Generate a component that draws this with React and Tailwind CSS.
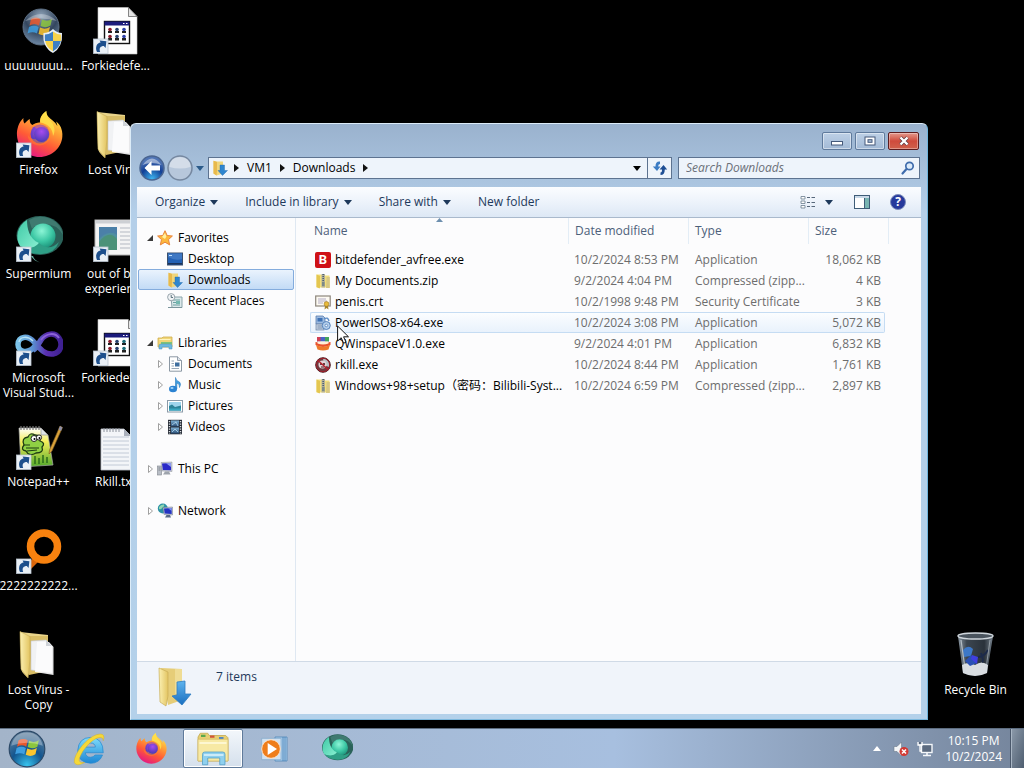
import React from "react";

/* ---------- shared gradients ---------- */

function Gradients() {
  return (
    <svg className="absolute h-0 w-0" aria-hidden="true">
      <defs>
        <linearGradient id="ff-body" x1="0.8" y1="0" x2="0.3" y2="1">
          <stop offset="0" stopColor="#fff44f" />
          <stop offset="0.35" stopColor="#ffa436" />
          <stop offset="0.65" stopColor="#ff5a36" />
          <stop offset="1" stopColor="#e31587" />
        </linearGradient>
        <radialGradient id="ff-core" cx="0.5" cy="0.3" r="0.7">
          <stop offset="0" stopColor="#a84bf0" />
          <stop offset="1" stopColor="#4a3bb4" />
        </radialGradient>
        <linearGradient id="folder" x1="0" y1="0" x2="1" y2="0">
          <stop offset="0" stopColor="#fbf0b2" />
          <stop offset="1" stopColor="#e3c562" />
        </linearGradient>
        <radialGradient id="sm-ball" cx="0.45" cy="0.3" r="0.75">
          <stop offset="0" stopColor="#8cf5d6" />
          <stop offset="0.55" stopColor="#3cc7a4" />
          <stop offset="1" stopColor="#178a74" />
        </radialGradient>
        <linearGradient id="sm-left" x1="0" y1="0" x2="1" y2="1">
          <stop offset="0" stopColor="#3fc9a6" />
          <stop offset="1" stopColor="#8af0d2" />
        </linearGradient>
        <linearGradient id="vs-loop" x1="0" y1="0" x2="1" y2="0">
          <stop offset="0" stopColor="#7cc4ea" />
          <stop offset="0.35" stopColor="#5a8fd0" />
          <stop offset="0.65" stopColor="#5a2fb0" />
          <stop offset="1" stopColor="#3f2192" />
        </linearGradient>
        <radialGradient id="orb-dark" cx="0.5" cy="0.2" r="0.9">
          <stop offset="0" stopColor="#8fa3b8" />
          <stop offset="0.5" stopColor="#33465e" />
          <stop offset="1" stopColor="#7f9cba" />
        </radialGradient>
        <radialGradient id="orb-start" cx="0.5" cy="0.95" r="0.9">
          <stop offset="0" stopColor="#37c3ee" />
          <stop offset="0.5" stopColor="#12558f" />
          <stop offset="1" stopColor="#5f7f9c" />
        </radialGradient>
        <radialGradient id="back-blue" cx="0.5" cy="0.95" r="0.8">
          <stop offset="0" stopColor="#3fb6f0" />
          <stop offset="0.6" stopColor="#123f95" />
          <stop offset="1" stopColor="#4f74b5" />
        </radialGradient>
        <linearGradient id="arrow-down" x1="0" y1="0" x2="0" y2="1">
          <stop offset="0" stopColor="#5fb4ee" />
          <stop offset="1" stopColor="#1a6fc0" />
        </linearGradient>
        <linearGradient id="ie-blue" x1="0" y1="0" x2="0" y2="1">
          <stop offset="0" stopColor="#7fdcfb" />
          <stop offset="1" stopColor="#1c86d4" />
        </linearGradient>
        <linearGradient id="bin-glass" x1="0" y1="0" x2="1" y2="0">
          <stop offset="0" stopColor="#8b98a3" />
          <stop offset="0.25" stopColor="#3c4650" />
          <stop offset="0.75" stopColor="#2a323b" />
          <stop offset="1" stopColor="#75818c" />
        </linearGradient>
        <linearGradient id="npp-green" x1="0" y1="0" x2="0" y2="1">
          <stop offset="0" stopColor="#ffffff" />
          <stop offset="0.35" stopColor="#f4ee5a" />
          <stop offset="1" stopColor="#4fa82a" />
        </linearGradient>
        <linearGradient id="film-blue" x1="0" y1="0" x2="0" y2="1">
          <stop offset="0" stopColor="#7fb2d6" />
          <stop offset="1" stopColor="#274b73" />
        </linearGradient>
      </defs>
    </svg>
  );
}

/* ---------- large icons ---------- */

function Big({ children, className = "size-12" }) {
  return (
    <svg viewBox="0 0 48 48" className={`${className} shrink-0`} aria-hidden="true">
      {children}
    </svg>
  );
}

function ShortcutMark() {
  return (
    <g>
      <rect x="1.500" y="32" width="14.500" height="14.500" fill="#eaf0f6" stroke="#b9c4cf" strokeWidth="0.8" />
      <path d="M5 45C2.800 39.800 5 35.800 8.600 35.400L7.600 33.400L14.400 34.200L13.600 41L11.800 39C8.800 39 6.600 41 8.200 45Z" fill="#1d4f8c" />
    </g>
  );
}

function FlagPanes() {
  return (
    <g>
      <path d="M15 14Q20 11 24.5 14L23 20.5Q18.5 17.500 13.500 20.500Z" fill="#e8572b" />
      <path d="M26 14.500Q31 17 36 14L34.500 20.500Q29.500 23.500 24.500 21Z" fill="#8cc63e" />
      <path d="M13 22Q18 19.500 22.600 22L21 28.500Q16.500 26 11.500 28.500Z" fill="#3f9fe0" />
      <path d="M24 22.500Q29 25 34 22L32.500 28.500Q27.500 31.500 22.500 29Z" fill="#fbc52d" />
    </g>
  );
}

function OrbShieldIcon() {
  return (
    <Big>
      <circle cx="26" cy="20" r="18" fill="url(#orb-dark)" stroke="#5d6f84" />
      <g transform="translate(1 -2)" opacity="0.85"><FlagPanes /></g>
      <path d="M10 14Q26 0 42 14Q26 9 10 14Z" fill="#fff" opacity="0.3" />
      <path d="M38 22Q42 26 47 26Q48 40 38 46Q27 40 28.500 26Q34 26 38 22Z" fill="#e7eef5" />
      <path d="M38 24.500V34H30Q29.600 30 30 27.500Q35 27 38 24.500Z" fill="#3c7fc4" />
      <path d="M38 24.500V34H46Q46 30 45.800 27.500Q41 27 38 24.500Z" fill="#f7d34a" />
      <path d="M38 34V44.300Q31.500 41 30.200 34Z" fill="#f7d34a" />
      <path d="M38 34V44.300Q44.500 41 45.800 34Z" fill="#3c7fc4" />
    </Big>
  );
}

function AppDocIcon({ red = "#8c1d2c", blue = "#2c3fa8" }) {
  const cells = [[17, red], [24, "#27406e"], [31, blue]];
  return (
    <Big>
      <path d="M6 .5H36.500L45 9.500V47H6Z" fill="#fdfdfd" stroke="#c8c8c8" strokeWidth="0.6" />
      <path d="M36.500 .5V9.500H45Z" fill="#e4e4e4" stroke="#555" strokeWidth="0.7" />
      <rect x="12.500" y="14.500" width="25" height="22" fill="#fff" stroke="#111" strokeWidth="1.400" />
      <rect x="12.500" y="14.500" width="25" height="4" fill="#1b1b7c" />
      <path d="M31 16.500h1.500M34 16.500h1.500" stroke="#fff" />
      {cells.map(([x, c]) => (
        <g key={x} fill={c}>
          <circle cx={x + 1} cy="22.500" r="1.800" />
          <rect x={x - 1} y="24" width="4" height="2" fill="#222" />
          <circle cx={x + 1} cy="29.500" r="1.800" />
          <rect x={x - 1} y="31" width="4" height="2.500" fill="#222" />
        </g>
      ))}
      <ShortcutMark />
    </Big>
  );
}

function FirefoxArt() {
  return (
    <g>
      <path d="M47 20C46 15 43.500 12 41 10.500C42 12.500 42.300 14 42.300 15C39.500 9.500 34.500 8 32.500 4.500C31.500 2.500 31.300 1.500 31.300 0C27 2.800 24.500 7.500 25 11.500C22 11.500 19.500 12.500 17.500 14C15 12.800 14.600 10.500 14.800 8C12.500 9.200 11 11 9.800 12.500C8.300 11.500 8.200 8.500 8.400 7C4 11 1.500 18 2 24.500C2.600 36.500 12.500 46 24.500 46C37 46 46.500 36.500 47.300 26C47.500 24 47.400 22 47 20Z" fill="url(#ff-body)" />
      <circle cx="25" cy="23" r="9.500" fill="url(#ff-core)" />
      <path d="M25 11.500C29.500 12.500 35 16 35.500 23C36 30.500 29.500 34.500 24.500 34.500C17.500 34.500 12.500 29 12.800 24C15.500 28 20 29.200 23.500 27.500C20 26.500 18 24.500 19 22.500C20 21 22.600 21 24.500 19.800C25 18.500 22 17.300 20.500 17C19.500 15.500 19.200 15.200 17.500 14C19.500 12.500 22 11.500 25 11.500Z" fill="#ff8a2b" opacity="0.45" />
      <circle cx="26.500" cy="23.500" r="7.500" fill="url(#ff-core)" />
      <path d="M31.300 0C27 3 24.500 7.500 25.500 11.500C32 12.500 38 17 38 25C41 20 39.500 14 35 9.500C32 6.500 31.300 3 31.300 0Z" fill="#ffe04a" opacity="0.85" />
    </g>
  );
}

function FirefoxIcon() {
  return <Big><FirefoxArt /><ShortcutMark /></Big>;
}

function FolderIcon() {
  return (
    <Big>
      <path d="M5 1L33 4V10L12 46Q5 40 6 36Z" fill="#e9d48a" />
      <path d="M14 5L33 5V40L14 44Z" fill="#d8bd66" />
      <path d="M16 10L31 9L37 15V42L16 39Z" fill="#f1f2f4" stroke="#c6c8cc" strokeWidth="0.6" />
      <path d="M22 11L34 11L38.500 16V44L20 41Z" fill="#fcfcfd" opacity="0.9" />
      <path d="M31 9V15H37Z" fill="#cfd3d8" />
      <path d="M5 0.500L15 5.500V28L13 47L6 38Z" fill="url(#folder)" stroke="#c8ac55" strokeWidth="0.600" />
    </Big>
  );
}

function SupermiumArt() {
  return (
    <g>
      <ellipse cx="25" cy="20.500" rx="23.500" ry="19.500" fill="#2a6259" />
      <path d="M14 5Q24 -1 36 4Q46 9 48 20Q42 8 27 9Q19 10 17 14Z" fill="#3f7a70" />
      <circle cx="28" cy="21" r="12.500" fill="url(#sm-ball)" />
      <path d="M12 5C2 11 0 23 5 31C14 36 22 33 24 28C14 24 12 13 12 5Z" fill="url(#sm-left)" />
      <path d="M24 28Q34 37 44 27Q40 38 27 39Q13 40 5 31Q17 36 24 28Z" fill="#2f9f86" />
    </g>
  );
}

function SupermiumIcon() {
  return (
    <Big>
      <SupermiumArt />
      <path d="M16 41Q19 46 25 47.500Q19 45 18 41Z" fill="#6bb5a6" />
      <ShortcutMark />
    </Big>
  );
}

function SetupWindowIcon() {
  return (
    <Big>
      <rect x="3" y="5" width="42" height="35" fill="#f4f4f4" stroke="#b5b5b5" />
      <rect x="3.500" y="5.500" width="41" height="3" fill="#cdd0d4" />
      <rect x="7" y="12" width="18" height="23" fill="#4f8fa0" />
      <path d="M7 27Q17 14 25 24V35H7Z" fill="#4b9278" />
      <path d="M7 12H25V20Q17 14 7 24Z" fill="#4b80a8" />
      <path d="M28 13H42M28 17H42M28 21H42M28 25H42M28 29H42M28 33H42" stroke="#b4b9c2" />
      <ShortcutMark />
    </Big>
  );
}

function VisualStudioIcon() {
  return (
    <Big>
      <path d="M20 27C14 35 3 34 3 25.500C3 17 13 16 19 23C25 30 30 36 38 35C46 33.500 48 25 44 19C40 13 31 14 26 21C23 25 22 29 18 31" fill="none" stroke="url(#vs-loop)" strokeWidth="5.500" />
      <path d="M26 21C31 14 40 13 44 19" fill="none" stroke="#8b62d8" strokeWidth="2" />
      <path d="M4 23C5 17 13 17 18 22" fill="none" stroke="#b7e2f5" strokeWidth="1.500" />
      <ShortcutMark />
    </Big>
  );
}

function NotepadPPIcon() {
  return (
    <Big>
      <path d="M4 5H26L33 12L38 42L6 44Z" fill="url(#npp-green)" stroke="#a9a9a9" strokeWidth="0.700" />
      <path d="M26 5V12H33Z" fill="#dfe3e6" stroke="#888" strokeWidth="0.600" />
      <path d="M6 3v4M9 3v4M12 3v4M15 3v4M18 3v4M21 3v4M24 3v4" stroke="#777" strokeWidth="1.200" />
      <path d="M9 22Q6 15 13 14Q15 9 20 12Q26 12 25 18Q31 20 27 24Q29 30 21 30Q14 34 11 28Q5 27 9 22Z" fill="#8fd044" stroke="#1d3b12" strokeWidth="1.300" />
      <circle cx="19" cy="15.500" r="3" fill="#fff" stroke="#222" />
      <circle cx="24" cy="14.500" r="2.600" fill="#fff" stroke="#222" />
      <circle cx="19.500" cy="16" r="1" />
      <circle cx="24.500" cy="15" r="1" />
      <path d="M11 25H24M12 28L22 27M9 22H15" stroke="#1d3b12" strokeWidth="1.100" />
      <path d="M20 41V33M24 41V35M28 40V32M32 40V34" stroke="#2b6b1b" strokeWidth="1.500" />
      <path d="M45 3L47.500 4.500L37 28L34 31L34.500 27Z" fill="#d9a13a" stroke="#7a5a20" strokeWidth="0.600" />
      <path d="M45 3L47.500 4.500L46 8L43.500 6.500Z" fill="#8f8fa6" />
      <ShortcutMark />
    </Big>
  );
}

function TextDocIcon() {
  return (
    <Big>
      <path d="M9 6H32L39 13V47H9Z" fill="#f3f5f8" stroke="#b9bec6" strokeWidth="0.800" />
      <path d="M32 6V13H39Z" fill="#aab0bb" />
      <path d="M12 5v4M15 5v4M18 5v4M21 5v4M24 5v4M27 5v4" stroke="#8c929c" />
      <path d="M11 14H37M11 18H37M11 22H37M11 26H37M11 30H37M11 34H37M11 38H37M11 42H37" stroke="#c2cad6" />
    </Big>
  );
}

function OrangeRingIcon() {
  return (
    <Big>
      <path d="M10 40L21 28L25 33L14 44Z" fill="#d9660d" />
      <circle cx="29" cy="19.500" r="13.500" fill="none" stroke="#f8820f" strokeWidth="7.500" />
      <ShortcutMark />
    </Big>
  );
}

function RecycleBinIcon() {
  return (
    <Big>
      <path d="M6 5L11 42Q23 48 35 42L41 5Z" fill="url(#bin-glass)" />
      <path d="M10 34Q17 30 23 34Q30 29 36 34L35 42Q23 48 11 42Z" fill="#d9dde1" />
      <path d="M11 19Q16 13 21 18L19 25L12 26Z" fill="#3d78c8" />
      <path d="M13 30L19 24L25 32L18 35Z" fill="#2a50b4" />
      <path d="M20 24L26 26L25 33L19 28Z" fill="#3f3fe0" />
      <path d="M26 26Q32 26 36 19M29 22Q32 30 30 31" stroke="#1c2a4a" strokeWidth="2" fill="none" />
      <ellipse cx="23.500" cy="5" rx="17.500" ry="3" fill="#4a545e" stroke="#cfd6dc" strokeWidth="1.400" />
      <path d="M9 9L13.500 41" stroke="#d4dce3" strokeWidth="1.200" opacity="0.7" />
      <path d="M38 9L33.500 41" stroke="#d4dce3" strokeWidth="1" opacity="0.5" />
    </Big>
  );
}

function DownloadFolderArt() {
  return (
    <g>
      <path d="M10 4L31 5V36L17 41Z" fill="#e6cd78" />
      <path d="M24 5L31 5V30H24Z" fill="#efdc94" />
      <path d="M8 4L17 8V32L15 42L9 38Z" fill="url(#folder)" stroke="#c9ad58" strokeWidth="0.700" />
      <path d="M26 18L34 17V30L40 30L31 41L21 32L26 31Z" fill="url(#arrow-down)" stroke="#2f7cc0" strokeWidth="0.800" />
    </g>
  );
}

/* ---------- 16px icons ---------- */

function Small({ children }) {
  return (
    <svg viewBox="0 0 16 16" className="size-4 shrink-0" aria-hidden="true">
      {children}
    </svg>
  );
}

const StarIcon = () => (
  <Small>
    <path d="M8 .7L10.200 5.500L15.400 6L11.500 9.600L12.700 14.900L8 12.200L3.300 14.900L4.500 9.600L.6 6L5.800 5.500Z" fill="#fcb83c" stroke="#e8843c" strokeWidth="1" />
    <path d="M8 3L9.400 6.500L8 9L5 7Z" fill="#fff0a0" />
  </Small>
);
const DesktopIcon = () => (
  <Small>
    <rect x=".5" y="2" width="15" height="12" fill="#2461b4" stroke="#3a4f6c" />
    <path d="M1 2.500H15V8Q8 10 1 6Z" fill="#3f78c4" />
    <rect x="2" y="4" width="3" height="1" fill="#bfe0ff" />
    <rect x="1" y="12" width="14" height="1.500" fill="#1c3358" />
  </Small>
);
const DownloadsIcon = () => (
  <Small>
    <path d="M1.500 .7L5 1.500H11V13.500L4.500 15.500L1.500 13.500Z" fill="#f0d67c" />
    <path d="M1.500 .7L5 2V11L4.500 15.500L1.500 13.500Z" fill="#e8b94c" />
    <path d="M8 5H12.500V10.500H15.500L10.500 15.500L6 10.500H8Z" fill="#2f86cf" stroke="#1f66a8" strokeWidth=".4" />
  </Small>
);
const RecentIcon = () => (
  <Small>
    <path d="M4 4H15V14.500H5Z" fill="#dbe8ea" stroke="#8aa4ab" />
    <path d="M6 7H13M6 9.500H13M6 12H13" stroke="#6aa0a0" />
    <rect x="9" y="8" width="4" height="3" fill="#74b8b0" />
    <circle cx="4.200" cy="4.200" r="3.600" fill="#f0f3f5" stroke="#97a3ab" />
    <path d="M4.200 2V4.500H6" stroke="#4c6470" fill="none" strokeWidth=".9" />
    <path d="M1 14.500H15" stroke="#7b959c" />
  </Small>
);
const LibrariesIcon = () => (
  <Small>
    <path d="M1 3H5L6 2H15V12H1Z" fill="#f0d678" stroke="#d0ad4c" strokeWidth=".8" />
    <path d="M2.500 4.500H13.500" stroke="#fff4c0" />
    <path d="M4 7H15V9H4Z" fill="#7cc27c" />
    <path d="M2 14V10.500Q2 9 4 9H13Q15 9 15 10.500V14H12V12H5V14Z" fill="#6db9df" stroke="#4893bd" strokeWidth=".5" />
  </Small>
);
const DocumentsIcon = () => (
  <Small>
    <path d="M2.500 .8H10.500L14.500 4.500V15.200H2.500Z" fill="#fff" stroke="#7f8c9a" strokeWidth=".9" />
    <path d="M10.500 .8V4.500H14.500" fill="#dde4ea" stroke="#7f8c9a" strokeWidth=".8" />
    <path d="M4.500 5H7M4.500 7.500H7M4.500 10H7M4.500 12.500H12" stroke="#98a8b8" />
    <rect x="8" y="6.500" width="4.500" height="4" fill="#3f6f9f" />
  </Small>
);
const MusicIcon = () => (
  <Small>
    <path d="M8.500 .5Q9 4 12.500 5Q14.500 7 12.500 10.500Q13 6.500 9.800 6V12H8.500Z" fill="#3f9de0" stroke="#2678bd" strokeWidth=".6" />
    <ellipse cx="6" cy="12" rx="4" ry="3.300" fill="#2b83d2" />
    <ellipse cx="5" cy="11" rx="1.600" ry="1" fill="#9fd4fa" />
  </Small>
);
const PicturesIcon = () => (
  <Small>
    <rect x=".5" y="2.500" width="15" height="11.500" fill="#fff" stroke="#8b9aa8" />
    <rect x="2" y="4" width="12" height="8.500" fill="#9fd4ec" />
    <path d="M2 8L5 6.500L8 9L14 7.500V12.500H2Z" fill="#2d8399" />
    <path d="M2 10.500H14V12.500H2Z" fill="#3aa7c0" />
  </Small>
);
const VideosIcon = () => (
  <Small>
    <rect x="1" y=".8" width="14" height="14.500" fill="#262c36" />
    <rect x="4" y="1.500" width="8" height="6" fill="url(#film-blue)" />
    <rect x="4" y="8.500" width="8" height="6" fill="url(#film-blue)" />
    <path d="M2.500 2V15M13.500 2V15" stroke="#d8dde3" strokeWidth="1.400" strokeDasharray="1.300 1.200" />
    <path d="M5 6L9 3L11 7M5 13L8 10L11 13" stroke="#b7dbf0" fill="none" strokeWidth=".8" />
  </Small>
);
const ComputerIcon = () => (
  <Small>
    <rect x="0.500" y="5" width="4" height="9" fill="#b9bec6" stroke="#7f858e" strokeWidth=".6" />
    <path d="M1.500 7H3.500M1.500 9H3.500" stroke="#70767f" strokeWidth=".8" />
    <path d="M4 1.500L15 1V10.500L5 10Z" fill="#c7ccd6" stroke="#8c919b" strokeWidth=".5" />
    <path d="M5 2.500L14 2V9.300L5.800 9Z" fill="#2a2ac8" />
    <path d="M9 2.300L14 2V6Z" fill="#8f9cf0" />
    <path d="M8 10.500H12L13.500 13.500H6Z" fill="#9da3ac" />
  </Small>
);
const NetworkIcon = () => (
  <Small>
    <circle cx="5.800" cy="5.500" r="5" fill="#2c91a5" />
    <path d="M2 4Q4 1 7 1.500Q8 3 5 5Q4 7 2 6Z" fill="#8fd6b0" />
    <path d="M6 4.500L15.500 4V12L7 11.500Z" fill="#c3c9d6" stroke="#6f7686" strokeWidth=".5" />
    <path d="M7 5.400L14.700 5V11L7.700 10.600Z" fill="#2433c4" />
    <path d="M11 5.200L14.700 5V8Z" fill="#7f92ee" />
    <path d="M9.500 12H13L14 14.500H8Z" fill="#5a6a88" />
  </Small>
);
const BitdefenderIcon = () => (
  <span aria-hidden="true" className="flex size-4 shrink-0 items-center justify-center rounded-[2px] bg-[#cf1117] font-['Roboto',sans-serif] text-[13px] leading-none font-bold text-white">
    B
  </span>
);
const ZipIcon = () => (
  <Small>
    <path d="M1.500 1.500H6L7 2.500H14.500V14.500H1.500Z" fill="#f3e07c" />
    <path d="M1.500 1.500L5 3V14.500L4.500 15.500L1.500 14Z" fill="#e4c650" />
    <path d="M11.500 4H14.800V15H11Z" fill="#d8c884" />
    <rect x="6.500" y="1" width="3.500" height="13.500" fill="#b5b195" />
    <path d="M8.200 1V9" stroke="#4a5f78" strokeWidth="1.600" strokeDasharray="1 1" />
    <rect x="7" y="9" width="2.500" height="4" fill="#7d8a88" />
  </Small>
);
const CertIcon = () => (
  <Small>
    <rect x=".7" y="2" width="14.500" height="10" fill="#fdfaf2" stroke="#8d867c" strokeWidth="1.200" />
    <path d="M3 5H11M3 7H12M3 9H8" stroke="#a9a4c0" strokeWidth=".9" />
    <circle cx="11.500" cy="10" r="2.400" fill="#e8ba3a" stroke="#9c7422" strokeWidth=".6" />
    <path d="M10 12L9.500 15.500L11.500 14L13.500 15.500L13 12Z" fill="#a8842c" />
  </Small>
);
const PowerIsoIcon = () => (
  <Small>
    <path d="M1 1H8L10 3V9H1Z" fill="#9dbbe0" stroke="#5a7fae" strokeWidth=".8" />
    <rect x="2.500" y="3" width="5" height="3.500" fill="#3f72b4" />
    <rect x="1" y="9" width="8" height="6" fill="#c3d0e0" stroke="#6a83a4" strokeWidth=".7" />
    <path d="M2.500 11H7.500M2.500 13H7.500" stroke="#6a83a4" strokeWidth=".8" />
    <circle cx="11.300" cy="10.500" r="4" fill="#b4cfec" stroke="#4a78b4" strokeWidth=".9" />
    <circle cx="11.300" cy="10.500" r="1.300" fill="#f4f9ff" stroke="#4a78b4" strokeWidth=".7" />
    <path d="M9 4Q13 1.500 14 6" stroke="#5f8fc8" fill="none" strokeWidth="1.400" />
  </Small>
);
const QWinspaceIcon = () => (
  <Small>
    <rect x="2" y="1" width="12" height="4.500" fill="#4b62c4" />
    <rect x="2" y="1" width="3.500" height="4.500" fill="#cf3f54" />
    <rect x="10" y="1" width="4" height="4.500" fill="#43a45c" />
    <path d="M.5 6Q8 7 15.500 6V9Q8 13 .5 9Z" fill="#e8522e" />
    <path d="M2.500 5.500H13.500V7.500Q8 9.500 2.500 7.500Z" fill="#fff1d8" />
    <path d="M1 9Q8 12.500 15 9L13.500 13.500Q8 15.500 2.500 13.500Z" fill="#ee7a2a" />
  </Small>
);
const RkillIcon = () => (
  <Small>
    <circle cx="8" cy="8" r="7.300" fill="#6e3a40" stroke="#4a2428" />
    <path d="M8 1.500A6.500 6.500 0 0 1 14 10L9 8Z" fill="#b7c0c4" />
    <circle cx="7.500" cy="7.500" r="4" fill="#e2d4d6" />
    <circle cx="6" cy="7" r="1.100" fill="#4a1a1e" />
    <circle cx="9" cy="7" r="1.100" fill="#4a1a1e" />
    <path d="M6 10H9.500" stroke="#4a1a1e" />
    <path d="M2.500 3L13.500 13" stroke="#b8202c" strokeWidth="1.400" />
    <circle cx="8" cy="8" r="6.700" fill="none" stroke="#a11f2a" strokeWidth="1" />
  </Small>
);

/* ---------- desktop ---------- */

function DesktopItem({ icon, label }) {
  return (
    <button type="button" className="flex h-[104px] w-[77px] flex-col items-center gap-[3px] pt-[7px]">
      {icon}
      <span className="whitespace-pre text-center text-xs leading-[15px] text-white">{label}</span>
    </button>
  );
}

const firstColumn = [
  ["uuuuuuuu...", <OrbShieldIcon />],
  ["Firefox", <FirefoxIcon />],
  ["Supermium", <SupermiumIcon />],
  ["Microsoft\nVisual Stud...", <VisualStudioIcon />],
  ["Notepad++", <NotepadPPIcon />],
  ["2222222222...", <OrangeRingIcon />],
  ["Lost Virus -\nCopy", <FolderIcon />],
];
const secondColumn = [
  ["Forkiedefe...", <AppDocIcon />],
  ["Lost Virus", <FolderIcon />],
  ["out of box\nexperience", <SetupWindowIcon />],
  ["Forkiedefe...", <AppDocIcon blue="#1c6d78" />],
  ["Rkill.txt", <TextDocIcon />],
];

function DesktopColumn({ items }) {
  return (
    <div className="flex w-[77px] flex-col">
      {items.map(([label, icon], i) => (
        <DesktopItem key={i} label={label} icon={icon} />
      ))}
    </div>
  );
}

/* ---------- explorer window ---------- */

function Caret({ className = "" }) {
  return (
    <svg viewBox="0 0 8 5" className={`h-[5px] w-2 shrink-0 ${className}`} aria-hidden="true">
      <path d="M0 0H8L4 5Z" fill="currentColor" />
    </svg>
  );
}

function Crumb() {
  return (
    <svg viewBox="0 0 5 8" className="h-2 w-[5px] shrink-0" aria-hidden="true">
      <path d="M0 0L5 4L0 8Z" fill="#111" />
    </svg>
  );
}

function CaptionButtons() {
  return (
    <div className="flex h-[18px] gap-[3px]">
      <button type="button" aria-label="Minimize" className="flex w-[30px] items-center justify-center rounded-[2px] border border-[#5f7a9c] bg-linear-to-b from-[#bdd0e6] to-[#a3bad6] shadow-[inset_0_0_0_1px_rgba(255,255,255,0.45)]">
        <svg viewBox="0 0 12 10" className="h-2.5 w-3"><rect x=".5" y="5.500" width="11" height="3.500" fill="#fff" stroke="#45597a" /></svg>
      </button>
      <button type="button" aria-label="Maximize" className="flex w-[30px] items-center justify-center rounded-[2px] border border-[#5f7a9c] bg-linear-to-b from-[#bdd0e6] to-[#a3bad6] shadow-[inset_0_0_0_1px_rgba(255,255,255,0.45)]">
        <svg viewBox="0 0 12 10" className="h-2.5 w-3"><rect x="1" y="1" width="10" height="8" fill="#fff" stroke="#45597a" /><rect x="4" y="3.700" width="4" height="2.600" fill="#a9bfd9" stroke="#45597a" /></svg>
      </button>
      <button type="button" aria-label="Close" className="flex w-[31px] items-center justify-center rounded-[2px] border border-[#5c1c1f] bg-linear-to-b from-[#e3978c] via-[#cf4a3c] to-[#d0604c] shadow-[inset_0_0_0_1px_rgba(255,255,255,0.35)]">
        <svg viewBox="0 0 12 10" className="h-2.5 w-3"><path d="M2.500 1.500L9.500 8.500M9.500 1.500L2.500 8.500" stroke="#5a3a44" strokeWidth="3.800" /><path d="M2.500 1.500L9.500 8.500M9.500 1.500L2.500 8.500" stroke="#fff" strokeWidth="2.400" /></svg>
      </button>
    </div>
  );
}

function NavigationBar() {
  return (
    <div className="flex h-7 items-center">
      <button type="button" aria-label="Back" className="ml-[2px] size-[26px] shrink-0">
        <svg viewBox="0 0 26 26"><circle cx="13" cy="13" r="12" fill="url(#back-blue)" stroke="#4a6590" strokeWidth="1.500" /><path d="M3.500 10Q13 -3 22.500 10Q13 6 3.500 10Z" fill="#fff" opacity=".45" /><path d="M12.500 6L5.500 13L12.500 20V15.500H21V10.500H12.500Z" fill="#fff" /></svg>
      </button>
      <button type="button" aria-label="Forward" className="ml-[2px] size-[26px] shrink-0">
        <svg viewBox="0 0 26 26"><circle cx="13" cy="13" r="12" fill="#b7c7db" stroke="#7688a0" strokeWidth="1.500" /><path d="M2.500 12Q3 2 13 2Q23 2 23.500 12Q13 15 2.500 12Z" fill="#fff" opacity=".4" /></svg>
      </button>
      <button type="button" aria-label="Recent pages" className="ml-px flex w-3 justify-center text-[#2b5b8a]">
        <Caret />
      </button>
      <div className="ml-[2px] flex h-[22px] min-w-0 flex-1 items-center border border-[#5d7390] bg-[#eef4fb] text-xs text-black">
        <span className="ml-[3px] flex"><DownloadsIcon /></span>
        <nav aria-label="Address" className="ml-1.5 flex items-center gap-2">
          <Crumb />
          <button type="button">VM1</button>
          <Crumb />
          <button type="button">Downloads</button>
          <Crumb />
        </nav>
        <button type="button" aria-label="Previous locations" className="ml-auto flex h-full w-5 items-center justify-center text-black">
          <Caret />
        </button>
        <button type="button" aria-label="Refresh" className="flex h-full w-6 items-center justify-center border-l border-[#5d7390]">
          <svg viewBox="0 0 16 16" className="size-4">
            <path d="M8 1.500Q3.500 1 3.500 6.500H.8L5 11L8.500 6.500H6.200Q6 4 8 4Z" fill="#3b7cc4" />
            <path d="M8.500 15Q12.800 15 12.800 9.500H15.200L11.500 5L7.500 9.500H10Q10.200 12.500 8.500 12.500Z" fill="#1f4f94" />
          </svg>
        </button>
      </div>
      <label className="ml-1.5 mr-px flex h-[22px] w-[242px] items-center border border-[#5d7390] bg-[#eef4fb] pl-[7px] pr-[3px]">
        <input aria-label="Search Downloads" placeholder="Search Downloads" className="min-w-0 flex-1 bg-transparent text-xs italic text-black outline-none placeholder:text-[#6b7079]" />
        <svg viewBox="0 0 16 16" className="size-4" aria-hidden="true">
          <circle cx="9.500" cy="6" r="3.700" fill="#dcebfa" stroke="#3f6cac" strokeWidth="1.700" />
          <path d="M6.500 9L2.500 13.500" stroke="#3f6cac" strokeWidth="2.200" strokeLinecap="round" />
        </svg>
      </label>
    </div>
  );
}

function Toolbar() {
  return (
    <div className="flex h-[31px] shrink-0 items-center gap-[27px] border-b border-[#a9b9cc] bg-linear-to-b from-[#fbfdff] via-[#edf3fb] to-[#dde8f5] pl-[18px] pr-[15px] text-xs text-[#1e395b]">
      <button type="button" className="flex items-center gap-[5px]">Organize <Caret /></button>
      <button type="button" className="flex items-center gap-[5px]">Include in library <Caret /></button>
      <button type="button" className="flex items-center gap-[5px]">Share with <Caret /></button>
      <button type="button">New folder</button>
      <div className="ml-auto flex items-center">
        <button type="button" aria-label="Change your view" className="flex">
          <svg viewBox="0 0 16 14" className="h-3.5 w-4">
            <path d="M1 1.500H5V4H1ZM1 6H5V8.500H1ZM1 10.500H5V13H1Z" fill="#fff" stroke="#6b7d8e" strokeWidth=".8" />
            <path d="M7 2.500H10M11.500 2.500H15M7 7.500H10M11.500 7.500H15M7 11.500H10M11.500 11.500H15" stroke="#56677a" />
          </svg>
        </button>
        <button type="button" aria-label="More view options" className="ml-[9px] flex">
          <Caret />
        </button>
        <button type="button" aria-label="Show the preview pane" className="ml-[21px] flex">
          <svg viewBox="0 0 16 14" className="h-3.5 w-4">
            <rect x=".5" y=".5" width="15" height="13" fill="#fff" stroke="#3f5d78" />
            <rect x="1" y="1" width="14" height="2" fill="#c9d9e8" />
            <rect x="11" y="3" width="4" height="10" fill="#79b5b3" />
            <path d="M10.500 3V13" stroke="#3f5d78" />
          </svg>
        </button>
        <button type="button" aria-label="Get help" className="ml-5 flex size-4 items-center justify-center rounded-full border border-[#7d8dbb] bg-[#26399c] text-xs leading-none font-bold text-white">
          ?
        </button>
      </div>
    </div>
  );
}

const tree = [
  { label: "Favorites", icon: <StarIcon />, open: true, children: [
    { label: "Desktop", icon: <DesktopIcon />, leaf: true },
    { label: "Downloads", icon: <DownloadsIcon />, leaf: true, selected: true },
    { label: "Recent Places", icon: <RecentIcon />, leaf: true },
  ] },
  { label: "Libraries", icon: <LibrariesIcon />, open: true, children: [
    { label: "Documents", icon: <DocumentsIcon /> },
    { label: "Music", icon: <MusicIcon /> },
    { label: "Pictures", icon: <PicturesIcon /> },
    { label: "Videos", icon: <VideosIcon /> },
  ] },
  { label: "This PC", icon: <ComputerIcon />, children: [] },
  { label: "Network", icon: <NetworkIcon />, children: [] },
];

function Twisty({ open, leaf }) {
  return (
    <svg viewBox="0 0 10 10" className="size-2.5 shrink-0" aria-hidden="true">
      {leaf ? null : open ? (
        <path d="M6 2V8H0Z" fill="#3a3a3a" />
      ) : (
        <path d="M1.500 1.500L5.500 5L1.500 8.500Z" fill="#fff" stroke="#a0a0a0" />
      )}
    </svg>
  );
}

function TreeRow({ item, nested }) {
  return (
    <button
      type="button"
      className={`flex h-[21px] w-full items-center rounded-[2px] border ${nested ? "pl-[18px]" : "pl-2"} ${
        item.selected ? "border-[#84acdd] bg-linear-to-b from-[#eaf3fd] to-[#c3dbf6]" : "border-transparent"
      }`}
    >
      <Twisty open={item.open} leaf={item.leaf} />
      {item.icon}
      <span className="ml-[5px] text-xs text-black">{item.label}</span>
    </button>
  );
}

function Sidebar() {
  return (
    <nav aria-label="Folders" className="flex w-[159px] shrink-0 flex-col gap-[21px] border-r border-[#dfe8f2] px-px pt-[9px]">
      {tree.map((group) => (
        <div key={group.label}>
          <TreeRow item={group} />
          {group.children.map((c) => (
            <TreeRow key={c.label} item={c} nested />
          ))}
        </div>
      ))}
    </nav>
  );
}

const files = [
  ["bitdefender_avfree.exe", "10/2/2024 8:53 PM", "Application", "18,062 KB", <BitdefenderIcon />],
  ["My Documents.zip", "9/2/2024 4:04 PM", "Compressed (zipp...", "4 KB", <ZipIcon />],
  ["penis.crt", "10/2/1998 9:48 PM", "Security Certificate", "3 KB", <CertIcon />],
  ["PowerISO8-x64.exe", "10/2/2024 3:08 PM", "Application", "5,072 KB", <PowerIsoIcon />],
  ["QWinspaceV1.0.exe", "9/2/2024 4:01 PM", "Application", "6,832 KB", <QWinspaceIcon />],
  ["rkill.exe", "10/2/2024 8:44 PM", "Application", "1,761 KB", <RkillIcon />],
  ["Windows+98+setup（密码：Bilibili-Syst...", "10/2/2024 6:59 PM", "Compressed (zipp...", "2,897 KB", <ZipIcon />],
];
const hovered = 3;

function FileTable() {
  return (
    <div className="min-w-0 flex-1 overflow-hidden pl-3.5">
      <table className="w-[579px] table-fixed border-separate border-spacing-0 text-left text-xs">
        <colgroup>
          <col className="w-[259px]" />
          <col className="w-[120px]" />
          <col className="w-[120px]" />
          <col className="w-[76px]" />
          <col className="w-1" />
        </colgroup>
        <thead>
          <tr className="h-[26px] text-[#4c607a]">
            <th scope="col" className="relative border-r border-[#e3edf6] pl-1 font-normal">
              Name
              <svg viewBox="0 0 7 4" className="absolute inset-x-0 top-0 mx-auto h-1 w-[7px]" aria-hidden="true"><path d="M0 4L3.500 0L7 4Z" fill="#6d8fae" /></svg>
            </th>
            <th scope="col" className="border-r border-[#e3edf6] pl-1.5 font-normal">Date modified</th>
            <th scope="col" className="border-r border-[#e3edf6] pl-1.5 font-normal">Type</th>
            <th scope="col" colSpan={2} className="border-r border-[#e3edf6] pl-1.5 font-normal">Size</th>
          </tr>
        </thead>
        <tbody>
          <tr className="h-[5px]"><td colSpan={5} /></tr>
          {files.map(([name, date, type, size, icon], i) => {
            const cell = i === hovered
              ? "border-y border-[#c5dcf3] bg-linear-to-b from-[#fbfdff] to-[#e9f2fc]"
              : "border-y border-transparent";
            return (
              <tr key={name} className="h-[21px] leading-[18px] text-[#6d6d6d]">
                <td className={`${cell} rounded-l-[2px] border-l pl-1`}>
                  <span className="flex items-center gap-1 whitespace-nowrap text-black">{icon}{name}</span>
                </td>
                <td className={`${cell} whitespace-nowrap pl-[5px]`}>{date}</td>
                <td className={`${cell} whitespace-nowrap pl-1.5`}>{type}</td>
                <td className={`${cell} whitespace-nowrap rounded-r-[2px] border-r pr-[3px] text-right`}>{size}</td>
                <td />
              </tr>
            );
          })}
        </tbody>
      </table>
    </div>
  );
}

function ExplorerWindow() {
  return (
    <section
      aria-label="Downloads"
      className="absolute top-[123px] right-24 bottom-12 left-[130px] flex flex-col rounded-t-md border border-[#dcecf8] border-r-[#6fb4dc] border-b-[#7db8dd] bg-linear-to-b from-[#9ab2ce] via-[#b4cfe9] via-15% to-[#b4d1ea] px-1.5 pb-[5px]"
    >
      <header className="flex h-[30px] items-start justify-end pt-2 pr-0.5">
        <CaptionButtons />
      </header>
      <NavigationBar />
      <div className="mt-[5px] flex min-h-0 flex-1 flex-col bg-[#fcfcfd]">
        <Toolbar />
        <div className="flex min-h-0 flex-1">
          <Sidebar />
          <FileTable />
        </div>
        <footer className="flex h-[53px] shrink-0 items-start border-t border-[#d0dae6] bg-[#f0f4fa] pl-3.5 text-xs text-[#1e395b]">
          <Big className="mt-0.5 size-12"><DownloadFolderArt /></Big>
          <span className="mt-[7px] ml-[17px]">7 items</span>
        </footer>
      </div>
    </section>
  );
}

/* ---------- taskbar ---------- */

function IeIcon() {
  return (
    <Big className="size-9">
      <path d="M43 29H19Q20 35 26 35Q30 35 32 32H42Q38 43 26 43Q9 42 9 26Q10 9 26 8.500Q43 9 43 29ZM19.500 21.500H32.500Q32 16 26 16Q20.500 16 19.500 21.500Z" fill="url(#ie-blue)" stroke="#2a8bd0" strokeWidth="1" />
      <path d="M43 13Q46 4 39 4Q29 4 16 18Q3 34 4.500 42Q7 48 18 42Q10 43 11 37Q14 27 24 17Q33 8.500 39 8.500Q43 8.500 43 13Z" fill="#f5d838" stroke="#d4ae22" strokeWidth="0.600" />
    </Big>
  );
}
function ExplorerIcon() {
  return (
    <Big className="size-9">
      <path d="M4 8L7 3H17L19 6H41L44 9V40H4Z" fill="#e6cf74" stroke="#c2a54a" strokeWidth="1" />
      <path d="M8 5H14V8H8Z" fill="#5aa84c" />
      <path d="M20 6H26V9H20Z" fill="#d0553a" />
      <path d="M32 8H38V11H32Z" fill="#4f86c4" />
      <path d="M4 11H44V40H4Z" fill="#f7e9a4" stroke="#d2b65c" strokeWidth="0.800" />
      <path d="M6 16H42" stroke="#fffbe0" strokeWidth="2" />
      <path d="M10 45V31Q10 28 13 28H37Q40 28 40 31V45H33V36H17V45Z" fill="#8fd0ee" stroke="#4f9cc4" strokeWidth="1" />
      <path d="M12 32H38" stroke="#dff4fd" strokeWidth="2" />
    </Big>
  );
}
function MediaPlayerIcon() {
  return (
    <Big className="size-8">
      <path d="M24 6H42V42H24Z" fill="#a9cdeb" stroke="#4f86b8" strokeWidth="1.200" />
      <path d="M36 6V42M39 6V42" stroke="#3f7ab0" strokeWidth="1.200" />
      <path d="M4 8H33V40H4Z" fill="#cfe1f2" stroke="#7fa6c9" />
      <circle cx="18" cy="24" r="14" fill="#ee7d1b" stroke="#fbe3cc" strokeWidth="1.500" />
      <path d="M13 15L27 24L13 33Z" fill="#fff" />
    </Big>
  );
}

function TaskButton({ label, active, children }) {
  return (
    <button
      type="button"
      aria-label={label}
      className={`flex w-[60px] items-center justify-center rounded-[2px] border ${
        active ? "border-[#5f7a9a] bg-linear-to-b from-[#f3f7fb] to-[#d5e0ec] shadow-[inset_0_0_0_1px_#fff]" : "border-transparent"
      }`}
    >
      {children}
    </button>
  );
}

function Taskbar() {
  return (
    <footer className="absolute inset-x-0 bottom-0 flex h-10 border-t border-[#5d6d80] bg-linear-to-r from-[#a3b4c9] via-[#a7bfdf] via-60% to-[#75859c]">
      <button type="button" aria-label="Start" className="ml-2 flex w-[38px] items-center">
        <Big className="size-[38px]">
          <circle cx="24" cy="24" r="22.500" fill="url(#orb-start)" stroke="#2d4a68" strokeWidth="1.500" />
          <g transform="translate(-5 -4) scale(1.220)"><FlagPanes /></g>
          <path d="M4 20Q8 3 24 3Q40 3 44 20Q24 12 4 20Z" fill="#fff" opacity=".3" />
        </Big>
      </button>
      <div className="ml-[13px] flex gap-0.5">
        <TaskButton label="Internet Explorer"><IeIcon /></TaskButton>
        <TaskButton label="Firefox"><Big className="size-8"><FirefoxArt /></Big></TaskButton>
        <TaskButton label="File Explorer" active><ExplorerIcon /></TaskButton>
        <TaskButton label="Media Player"><MediaPlayerIcon /></TaskButton>
        <TaskButton label="Supermium"><Big className="size-8"><g transform="translate(0 1)"><SupermiumArt /></g></Big></TaskButton>
      </div>
      <div className="ml-auto flex items-center text-white">
        <button type="button" aria-label="Show hidden icons" className="mr-3">
          <svg viewBox="0 0 8 5" className="h-[5px] w-2"><path d="M0 5L4 0L8 5Z" fill="#fff" /></svg>
        </button>
        <button type="button" aria-label="Volume muted" className="mr-2">
          <svg viewBox="0 0 16 16" className="size-4">
            <path d="M1 5.500H4L8.500 1V15L4 10.500H1Z" fill="#f3f5f7" stroke="#6d7a8a" strokeWidth=".6" />
            <circle cx="11" cy="10.500" r="4.500" fill="#d23a34" />
            <path d="M9 8.500L13 12.500M13 8.500L9 12.500" stroke="#fff" strokeWidth="1.500" />
          </svg>
        </button>
        <button type="button" aria-label="Network" className="mr-3">
          <svg viewBox="0 0 16 16" className="size-4">
            <rect x="4.500" y="3.500" width="10.500" height="8" fill="#5c6b80" stroke="#f4f7fa" strokeWidth="1.400" />
            <path d="M6 14.500H14M10 12V14" stroke="#f4f7fa" strokeWidth="1.600" />
            <path d="M1 1V4H5V1M3 4V10H5" stroke="#fff" strokeWidth="1.300" fill="none" />
            <path d="M2.500 1V3M3.700 1V3" stroke="#394757" strokeWidth=".6" />
          </svg>
        </button>
        <time className="mr-2 text-center text-xs leading-4">10:15 PM<br />10/2/2024</time>
        <button type="button" aria-label="Show desktop" className="h-full w-3.5 border-l border-[#4a586b] bg-linear-to-br from-[#8d9bab] to-[#4f5e70] shadow-[inset_1px_0_0_#a9b6c4]" />
      </div>
    </footer>
  );
}

export default function App() {
  return (
    <main className="relative min-h-screen overflow-hidden bg-black font-['Open_Sans','Noto_Sans_CJK_SC',sans-serif]">
      <Gradients />
      <div className="flex">
        <DesktopColumn items={firstColumn} />
        <DesktopColumn items={secondColumn} />
      </div>
      <div className="absolute top-[624px] right-[10px]">
        <DesktopItem label="Recycle Bin" icon={<RecycleBinIcon />} />
      </div>
      <ExplorerWindow />
      <Taskbar />
      <svg viewBox="0 0 12 19" className="pointer-events-none absolute top-[325px] left-[337px] h-[19px] w-3" aria-hidden="true">
        <path d="M.6 1V16L4.200 12.700L6.600 18.200L9 17.200L6.600 11.800H11.500Z" fill="#fff" stroke="#111" strokeWidth="1" />
      </svg>
    </main>
  );
}
